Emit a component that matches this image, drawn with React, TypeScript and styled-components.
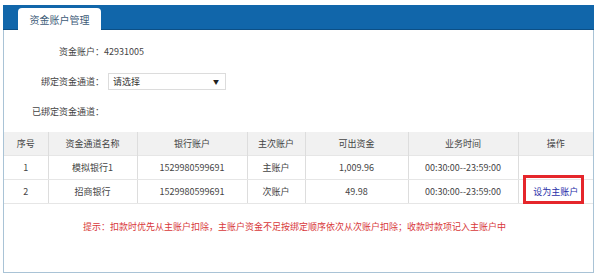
import { createGlobalStyle, styled } from 'styled-components';

const FONT_STACK = '"Microsoft YaHei", "Noto Sans CJK SC", "Liberation Sans", sans-serif';

const COLOR = {
  BLUE: '#1166aa',
  BLUE_DARK: '#0c4f86',
  FRAME: '#a9c3d6',
  TEXT: '#444444',
  LINE: '#dddddd',
  HEAD_BG: '#f1f1f1',
  RED: '#e5262b',
  TIP: '#d8383a',
  LINK: '#2a2fa8'
};

const rows = [
  { id: 1, name: '模拟银行1', account: '1529980599691', type: '主账户', amount: '1,009.96', time: '00:30:00--23:59:00', action: false },
  { id: 2, name: '招商银行', account: '1529980599691', type: '次账户', amount: '49.98', time: '00:30:00--23:59:00', action: true }
];

const columns = [
  { title: '序号', width: 44 },
  { title: '资金通道名称', width: 89 },
  { title: '银行账户', width: 110 },
  { title: '主次账户', width: 58 },
  { title: '可出资金', width: 103 },
  { title: '业务时间', width: 110 },
  { title: '操作', width: 75 }
];

const App = () => {
  return (
    <>
      <GlobalStyle />
      <Frame>
        <Header>
          <Tab>资金账户管理</Tab>
        </Header>
        <Form>
          <FormRow>
            <Label>资金账户：</Label>
            <Value>42931005</Value>
          </FormRow>
          <FormRow>
            <Label>绑定资金通道：</Label>
            <Select>
              <span>请选择</span>
              <Arrow>▼</Arrow>
            </Select>
          </FormRow>
          <FormRow>
            <Label>已绑定资金通道：</Label>
          </FormRow>
        </Form>
        <Table>
          <colgroup>
            {columns.map((c) => (
              <col key={c.title} style={{ width: c.width }} />
            ))}
          </colgroup>
          <thead>
            <tr>
              {columns.map((c) => (
                <HeadCell key={c.title}>{c.title}</HeadCell>
              ))}
            </tr>
          </thead>
          <tbody>
            {rows.map((row) => (
              <tr key={row.id}>
                <Cell>{row.id}</Cell>
                <Cell>{row.name}</Cell>
                <Cell>{row.account}</Cell>
                <Cell>{row.type}</Cell>
                <Cell>{row.amount}</Cell>
                <Cell>{row.time}</Cell>
                <ActionCell>
                  {row.action && (
                    <>
                      <Link>设为主账户</Link>
                      <Highlight />
                    </>
                  )}
                </ActionCell>
              </tr>
            ))}
          </tbody>
        </Table>
        <Tip>提示：扣款时优先从主账户扣除，主账户资金不足按绑定顺序依次从次账户扣除；收款时款项记入主账户中</Tip>
      </Frame>
    </>
  );
};

const GlobalStyle = createGlobalStyle`
  body {
    margin: 0;
    background: #ffffff;
    font-family: ${FONT_STACK};
  }
`;

const Frame = styled.div`
  box-sizing: border-box;
  margin: 5px 0 0 3px;
  width: 591px;
  height: 268px;
  border: 1px solid ${COLOR.FRAME};
  border-top: none;
  display: flex;
  flex-direction: column;
`;

const Header = styled.div`
  box-sizing: border-box;
  height: 25px;
  margin: 0 -1px;
  padding-left: 15px;
  background: ${COLOR.BLUE};
  border-bottom: 1px solid ${COLOR.BLUE_DARK};
  display: flex;
  align-items: flex-end;
`;

const Tab = styled.div`
  width: 83px;
  height: 22px;
  margin-bottom: -1px;
  background: #ffffff;
  border-radius: 4px 4px 0 0;
  display: flex;
  align-items: center;
  justify-content: center;
  font-size: 10px;
  color: #3d5b78;
`;

const Form = styled.div`
  padding-top: 6px;
  display: flex;
  flex-direction: column;
`;

const FormRow = styled.div`
  height: 30px;
  display: flex;
  align-items: center;
  font-size: 9px;
  color: ${COLOR.TEXT};
`;

const Label = styled.div`
  width: 100px;
  text-align: right;
`;

const Value = styled.div`
  margin-left: 0;
`;

const Select = styled.div`
  box-sizing: border-box;
  margin-left: 4px;
  width: 118px;
  height: 17px;
  padding: 0 6px 0 4px;
  border: 1px solid #dcdcdc;
  background: #ffffff;
  display: flex;
  align-items: center;
  justify-content: space-between;
  color: #333333;
`;

const Arrow = styled.span`
  font-size: 6px;
  color: #222222;
`;

const Table = styled.table`
  margin-top: 6px;
  width: 100%;
  border-collapse: collapse;
  table-layout: fixed;
  font-size: 9px;
  color: ${COLOR.TEXT};
`;

const HeadCell = styled.th`
  height: 23px;
  padding: 0;
  font-weight: normal;
  background: ${COLOR.HEAD_BG};
  border-left: 1px solid ${COLOR.LINE};
  &:first-child {
    border-left: none;
  }
`;

const Cell = styled.td`
  height: 23px;
  padding: 0;
  text-align: center;
  border-left: 1px solid ${COLOR.LINE};
  border-top: 1px solid #e6e6e6;
  border-bottom: 1px solid #e6e6e6;
  &:first-child {
    border-left: none;
  }
`;

const ActionCell = styled(Cell)`
  position: relative;
`;

const Link = styled.span`
  color: ${COLOR.LINK};
`;

const Highlight = styled.span`
  position: absolute;
  left: 4px;
  right: 9px;
  top: -5px;
  bottom: -1px;
  border: 3px solid ${COLOR.RED};
`;

const Tip = styled.div`
  margin-top: 16px;
  padding-right: 8px;
  text-align: center;
  font-size: 9px;
  color: ${COLOR.TIP};
`;

export default App;
